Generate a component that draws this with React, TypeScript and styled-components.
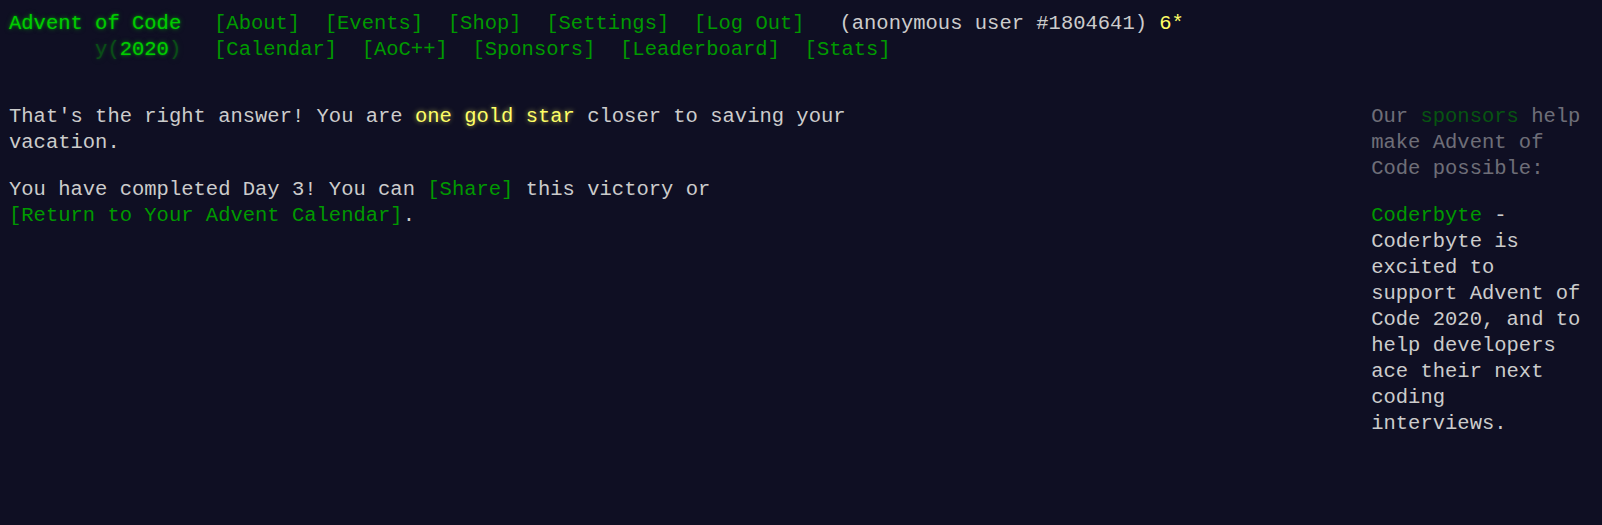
import React from "react";
import styled, { createGlobalStyle } from "styled-components";

const GlobalStyle = createGlobalStyle`
  html, body {
    margin: 0;
    padding: 0;
    background: #0f0f23;
  }
  body {
    color: #cccccc;
    font-family: "Liberation Mono", "DejaVu Sans Mono", monospace;
    font-size: 20.5px;
    line-height: 26px;
    min-height: 525px;
  }
  * { box-sizing: border-box; }
`;

const Page = styled.div`
  padding: 11px 9px 9px 9px;
`;

const Header = styled.header`
  display: flex;
  flex-direction: column;
  white-space: nowrap;
  margin-bottom: 2em;
`;

const HeaderRow = styled.div`
  display: flex;
  align-items: baseline;
`;

const Title = styled.h1`
  margin: 0;
  width: 14ch;
  margin-right: 1em;
  font-size: 1em;
  font-weight: normal;
  text-align: right;
  color: #00cc00;
  text-shadow: 0 0 2px rgba(0, 204, 0, 0.6), 0 0 5px rgba(0, 204, 0, 0.5);
  flex: none;
`;

const TitleLink = styled.a`
  color: #00cc00;
  text-decoration: none;
`;

const TitleWrap = styled.span`
  opacity: 0.33;
  white-space: pre;
`;

const NavList = styled.ul`
  display: flex;
  list-style: none;
  margin: 0;
  padding: 0;
`;

const NavItem = styled.li`
  padding: 0 0.6em;
`;

const Link = styled.a`
  color: #009900;
  text-decoration: none;
  white-space: nowrap;
`;

const User = styled.div`
  margin-left: 1.1em;
`;

const StarCount = styled.span`
  color: #ffff66;
`;

const Content = styled.div`
  display: flex;
  align-items: flex-start;
`;

const Article = styled.article`
  width: 45em;
  flex: none;
`;

const Para = styled.p`
  margin: 0 0 1em 0;
`;

const Star = styled.em`
  font-style: normal;
  color: #ffff66;
  text-shadow: 0 0 5px rgba(255, 255, 102, 0.6);
`;

const Sidebar = styled.aside`
  margin-left: auto;
  margin-right: 6.5px;
  width: 17.5ch;
  flex: none;
`;

const Quiet = styled.div`
  opacity: 0.5;
  margin-bottom: 1em;
`;

const Sponsor = styled.div``;

const topNav = ["About", "Events", "Shop", "Settings", "Log Out"];
const eventNav = ["Calendar", "AoC++", "Sponsors", "Leaderboard", "Stats"];

export default function App() {
  return (
    <>
      <GlobalStyle />
      <Page>
        <Header>
          <HeaderRow>
            <Title>
              <TitleLink href="#">Advent of Code</TitleLink>
            </Title>
            <NavList>
              {topNav.map((n) => (
                <NavItem key={n}>
                  <Link href="#">[{n}]</Link>
                </NavItem>
              ))}
            </NavList>
            <User>
              (anonymous user #1804641) <StarCount>6*</StarCount>
            </User>
          </HeaderRow>
          <HeaderRow>
            <Title>
              <TitleWrap>y(</TitleWrap>
              <TitleLink href="#">2020</TitleLink>
              <TitleWrap>)</TitleWrap>
            </Title>
            <NavList>
              {eventNav.map((n) => (
                <NavItem key={n}>
                  <Link href="#">[{n}]</Link>
                </NavItem>
              ))}
            </NavList>
          </HeaderRow>
        </Header>
        <Content>
          <Article>
            <Para>
              That's the right answer! You are <Star>one gold star</Star> closer
              to saving your vacation.
            </Para>
            <Para>
              You have completed Day 3! You can <Link href="#">[Share]</Link>{" "}
              this victory or <Link href="#">[Return to Your Advent Calendar]</Link>.
            </Para>
          </Article>
          <Sidebar>
            <Quiet>
              Our <Link href="#">sponsors</Link> help make Advent of Code
              possible:
            </Quiet>
            <Sponsor>
              <Link href="#">Coderbyte</Link> - Coderbyte is excited to support
              Advent of Code 2020, and to help developers ace their next coding
              interviews.
            </Sponsor>
          </Sidebar>
        </Content>
      </Page>
    </>
  );
}
